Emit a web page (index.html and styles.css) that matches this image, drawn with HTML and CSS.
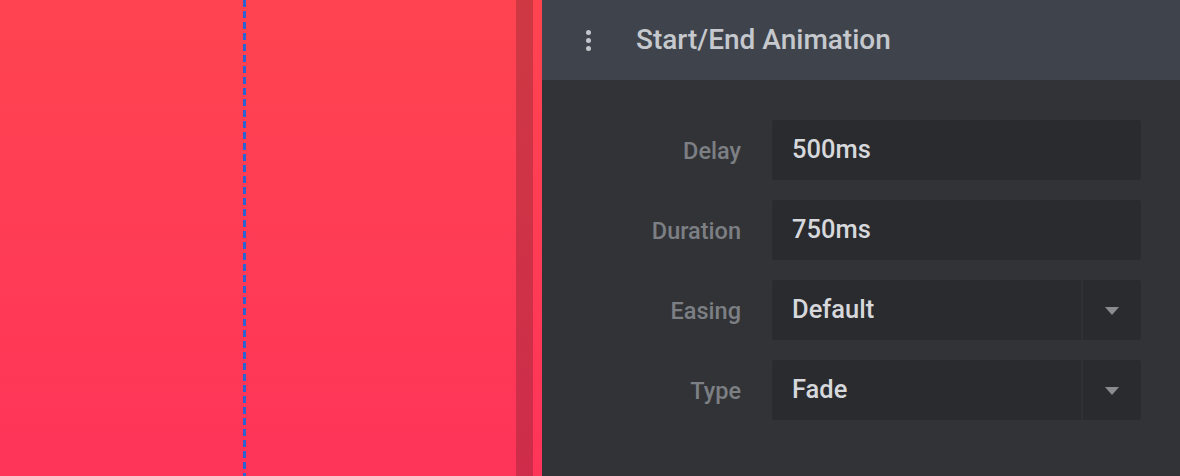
FILE: index.html
```html
<!DOCTYPE html>
<html>
<head>
<meta charset="utf-8">
<link rel="stylesheet" href="styles.css">
</head>
<body>
<div class="app">
  <div class="stage">
    <div class="canvas"><div class="guide"></div></div>
    <div class="gutter"></div>
  </div>
  <div class="panel">
    <div class="panel-head">
      <div class="kebab"><span></span><span></span><span></span></div>
      <div class="title">Start/End Animation</div>
    </div>
    <div class="panel-body">
      <div class="row">
        <label class="label">Delay</label>
        <div class="field"><span class="value">500ms</span></div>
      </div>
      <div class="row">
        <label class="label">Duration</label>
        <div class="field"><span class="value">750ms</span></div>
      </div>
      <div class="row">
        <label class="label">Easing</label>
        <div class="field select"><span class="value">Default</span><span class="caret"></span></div>
      </div>
      <div class="row">
        <label class="label">Type</label>
        <div class="field select"><span class="value">Fade</span><span class="caret"></span></div>
      </div>
    </div>
  </div>
</div>
</body>
</html>
```
FILE: styles.css
```css
* { box-sizing: border-box; }
html, body { margin: 0; padding: 0; }
body {
  width: 1180px;
  height: 476px;
  overflow: hidden;
  font-family: Roboto, "Liberation Sans", sans-serif;
  background: #323336;
}
.app {
  display: flex;
  height: 476px;
}
.stage {
  width: 542px;
  flex: none;
  display: flex;
  background: linear-gradient(180deg, #ff4450 0%, #ff3459 100%);
}
.canvas {
  width: 516px;
  padding-left: 243px;
}
.guide {
  width: 3px;
  height: 100%;
  background: repeating-linear-gradient(180deg, #2e62d0 0 7px, transparent 7px 11px);
}
.gutter {
  width: 17px;
  background: rgba(50, 20, 30, 0.24);
}
.panel {
  flex: 1;
  display: flex;
  flex-direction: column;
  background: #323336;
}
.panel-head {
  height: 80px;
  background: #3f434b;
  display: flex;
  align-items: center;
  padding-left: 44px;
}
.kebab {
  width: 5px;
  display: flex;
  flex-direction: column;
  gap: 3px;
  margin-right: 45px;
}
.kebab span {
  width: 5px;
  height: 5px;
  border-radius: 50%;
  background: #c3c6cb;
}
.title {
  color: #c5c8cd;
  font-size: 28px;
  font-weight: 500;
  margin-top: -2px;
}
.panel-body {
  padding: 40px 39px 0 0;
  display: flex;
  flex-direction: column;
  gap: 20px;
}
.row {
  display: flex;
  align-items: center;
  height: 60px;
}
.label {
  width: 199px;
  text-align: right;
  color: #7c7f84;
  font-size: 23.5px;
  font-weight: 500;
  padding-top: 2px;
}
.field {
  margin-left: 31px;
  flex: 1;
  height: 60px;
  background: #2a2b2f;
  border-radius: 3px;
  display: flex;
  align-items: center;
  padding-left: 20px;
}
.value {
  flex: 1;
  color: #d6d8dc;
  font-size: 25.5px;
  font-weight: 500;
  margin-top: -2px;
}
.select .caret {
  width: 60px;
  height: 60px;
  border-left: 2px solid #303135;
  display: flex;
  align-items: center;
  justify-content: center;
}
.select .caret::after {
  content: "";
  width: 0;
  height: 0;
  border-left: 7px solid transparent;
  border-right: 7px solid transparent;
  border-top: 8px solid #8a8c91;
  margin-top: 2px;
}
```
